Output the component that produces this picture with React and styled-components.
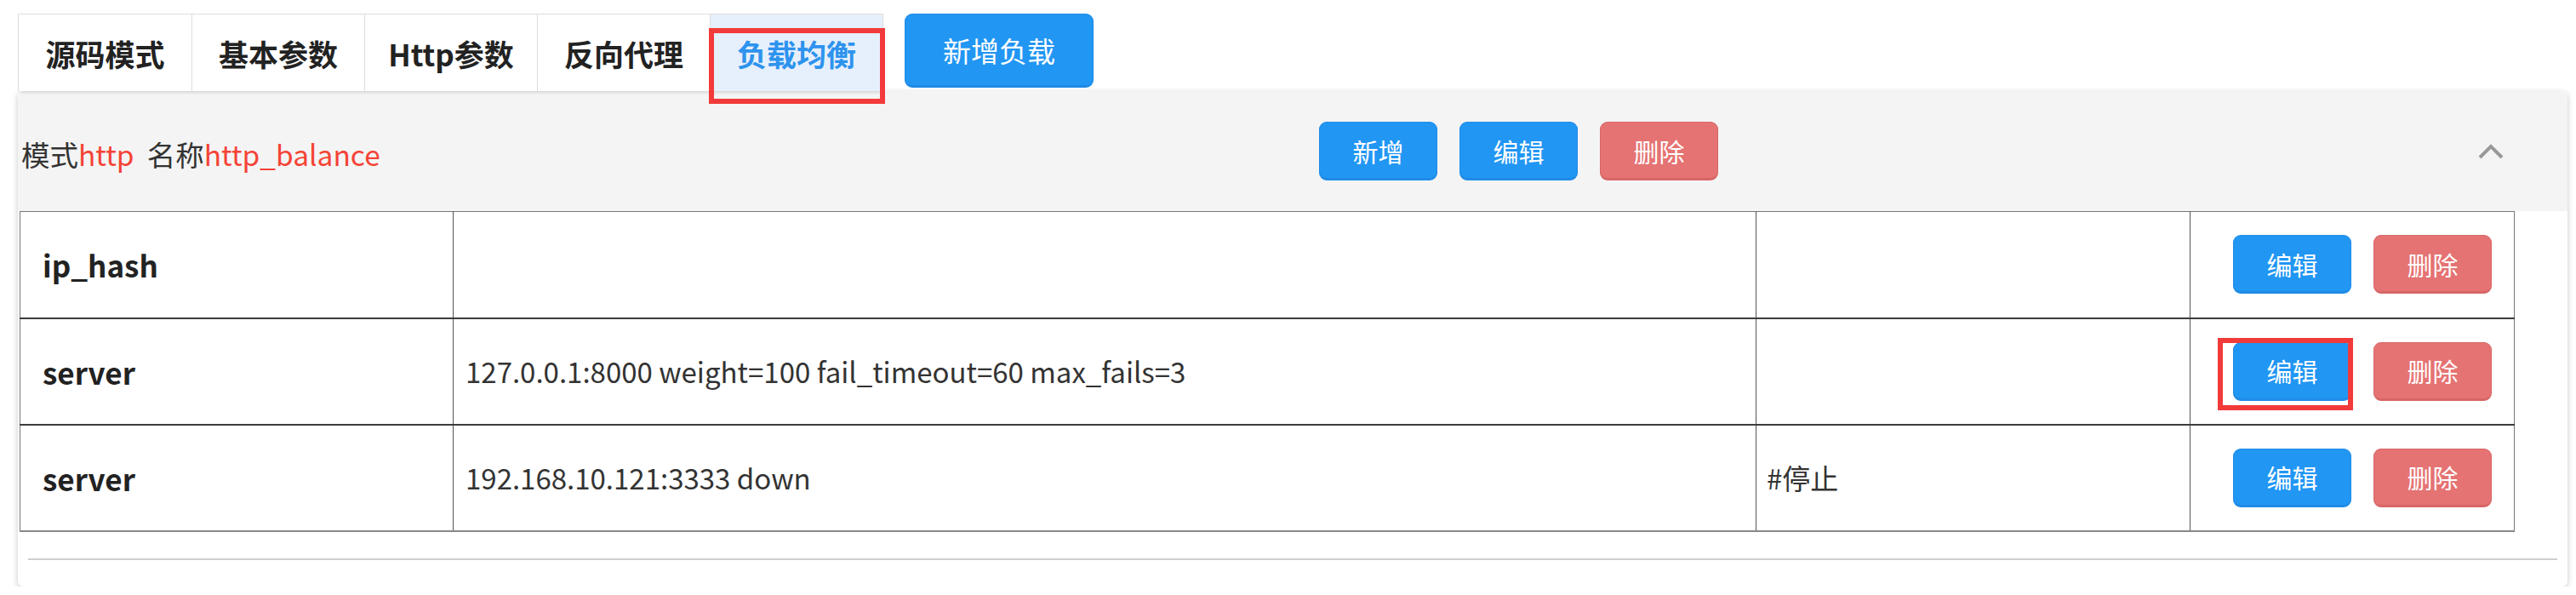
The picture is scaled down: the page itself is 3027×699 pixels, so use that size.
import React from 'react';
import styled, { createGlobalStyle } from 'styled-components';

const GlobalStyle = createGlobalStyle`
  body {
    margin: 0;
    background: #fff;
    font-family: "Noto Sans CJK SC", "Noto Sans", sans-serif;
    color: #333;
  }
`;

const Page = styled.div`
  padding: 16px 10px 0 21px;
`;

const TopBar = styled.div`
  display: flex;
  align-items: flex-start;
  gap: 25px;
  position: relative;
  z-index: 2;
`;

const Tabs = styled.div`
  display: flex;
  border: 1px solid #ddd;
  border-bottom: none;
  box-shadow: 0 4px 4px -3px rgba(0, 0, 0, 0.18);
`;

const Tab = styled.div`
  position: relative;
  box-sizing: border-box;
  width: 203px;
  height: 90px;
  display: flex;
  align-items: center;
  justify-content: center;
  font-size: 35px;
  font-weight: 700;
  color: ${(p) => (p.active ? '#2e93ee' : '#222')};
  background: ${(p) => (p.active ? '#e6f0fc' : '#fff')};
  & + & {
    border-left: 1px solid #ddd;
  }
`;

// 红色标注框
const Highlight = styled.span`
  position: absolute;
  box-sizing: border-box;
  border: 6px solid #f23a3a;
  pointer-events: none;
`;

const TabHighlight = styled(Highlight)`
  left: -2px;
  top: 16px;
  width: 207px;
  height: 89px;
`;

const Button = styled.button`
  box-sizing: border-box;
  width: ${(p) => p.w || 139}px;
  height: ${(p) => p.h || 69}px;
  padding: 0;
  border: 1px solid ${(p) => (p.danger ? '#d86666' : '#1f8be6')};
  border-bottom-width: 3px;
  border-radius: 9px;
  background: ${(p) => (p.danger ? '#e57373' : '#2196f3')};
  color: #fff;
  font-family: inherit;
  font-size: ${(p) => p.fs || 30}px;
  cursor: pointer;
`;

const Panel = styled.div`
  background: #fff;
  border-radius: 6px;
  box-shadow: 0 2px 7px rgba(0, 0, 0, 0.22);
  overflow: hidden;
  padding-bottom: 31px;
`;

const PanelHeader = styled.div`
  display: flex;
  align-items: center;
  height: 141px;
  padding-left: 4px;
  background: #f4f4f4;
`;

const HeaderInfo = styled.div`
  width: 1525px;
  flex-shrink: 0;
  font-size: 33.5px;
  color: #333;
  padding-top: 6px;
`;

const Value = styled.span`
  color: #f44336;
`;

const ButtonGroup = styled.div`
  display: flex;
  gap: 26px;
  justify-content: ${(p) => (p.right ? 'flex-end' : 'flex-start')};
`;

const Chevron = styled.svg`
  margin-left: auto;
  margin-right: 75px;
`;

const Table = styled.table`
  margin-left: 2px;
  width: 2931px;
  border-collapse: collapse;
  table-layout: fixed;
  border-top: 1px solid #777;
  border-bottom: 2px solid #888;
`;

const Row = styled.tr`
  height: 125px;
  & + & td {
    border-top: 2px solid #3c3c3c;
  }
`;

const Cell = styled.td`
  border-left: 1px solid #444;
  border-right: 1px solid #555;
  padding: 0 ${(p) => p.pr || 0}px 0 ${(p) => p.pl || 14}px;
  font-size: ${(p) => (p.bold ? 35 : 33)}px;
  font-weight: ${(p) => (p.bold ? 700 : 400)};
  color: ${(p) => (p.bold ? '#222' : '#333')};
  vertical-align: middle;
  &:first-child {
    border-left-color: #777;
  }
  &:last-child {
    border-right-color: #777;
  }
`;

const Mark = styled.span`
  position: relative;
  display: inline-flex;
`;

const ButtonHighlight = styled(Highlight)`
  left: -18px;
  top: -5px;
  width: 159px;
  height: 85px;
`;

const Divider = styled.div`
  margin: 31px 12px 0;
  height: 2px;
  background: #cfcfcf;
`;

const rows = [
  { name: 'ip_hash', value: '', note: '' },
  { name: 'server', value: '127.0.0.1:8000 weight=100 fail_timeout=60 max_fails=3', note: '', marked: true },
  { name: 'server', value: '192.168.10.121:3333 down', note: '#停止' },
];

const tabs = ['源码模式', '基本参数', 'Http参数', '反向代理', '负载均衡'];

export default function App() {
  return (
    <Page>
      <GlobalStyle />
      <TopBar>
        <Tabs>
          {tabs.map((t, i) => (
            <Tab key={t} active={i === 4}>
              {t}
              {i === 4 && <TabHighlight />}
            </Tab>
          ))}
        </Tabs>
        <Button w={222} h={87} fs={33}>新增负载</Button>
      </TopBar>

      <Panel>
        <PanelHeader>
          <HeaderInfo>
            模式<Value>http</Value>&nbsp;&nbsp;名称<Value>http_balance</Value>
          </HeaderInfo>
          <ButtonGroup>
            <Button>新增</Button>
            <Button>编辑</Button>
            <Button danger>删除</Button>
          </ButtonGroup>
          <Chevron width="30" height="20" viewBox="0 0 30 20">
            <polyline points="2,17 15,4 28,17" fill="none" stroke="#999" strokeWidth="4" />
          </Chevron>
        </PanelHeader>

        <Table>
          <colgroup>
            <col style={{ width: 509 }} />
            <col style={{ width: 1531 }} />
            <col style={{ width: 510 }} />
            <col style={{ width: 381 }} />
          </colgroup>
          <tbody>
            {rows.map((r, i) => (
              <Row key={i}>
                <Cell bold pl={26}>{r.name}</Cell>
                <Cell>{r.value}</Cell>
                <Cell pl={12}>{r.note}</Cell>
                <Cell pl={0} pr={26}>
                  <ButtonGroup right>
                    {r.marked ? (
                      <Mark>
                        <Button>编辑</Button>
                        <ButtonHighlight />
                      </Mark>
                    ) : (
                      <Button>编辑</Button>
                    )}
                    <Button danger>删除</Button>
                  </ButtonGroup>
                </Cell>
              </Row>
            ))}
          </tbody>
        </Table>
        <Divider />
      </Panel>
    </Page>
  );
}
